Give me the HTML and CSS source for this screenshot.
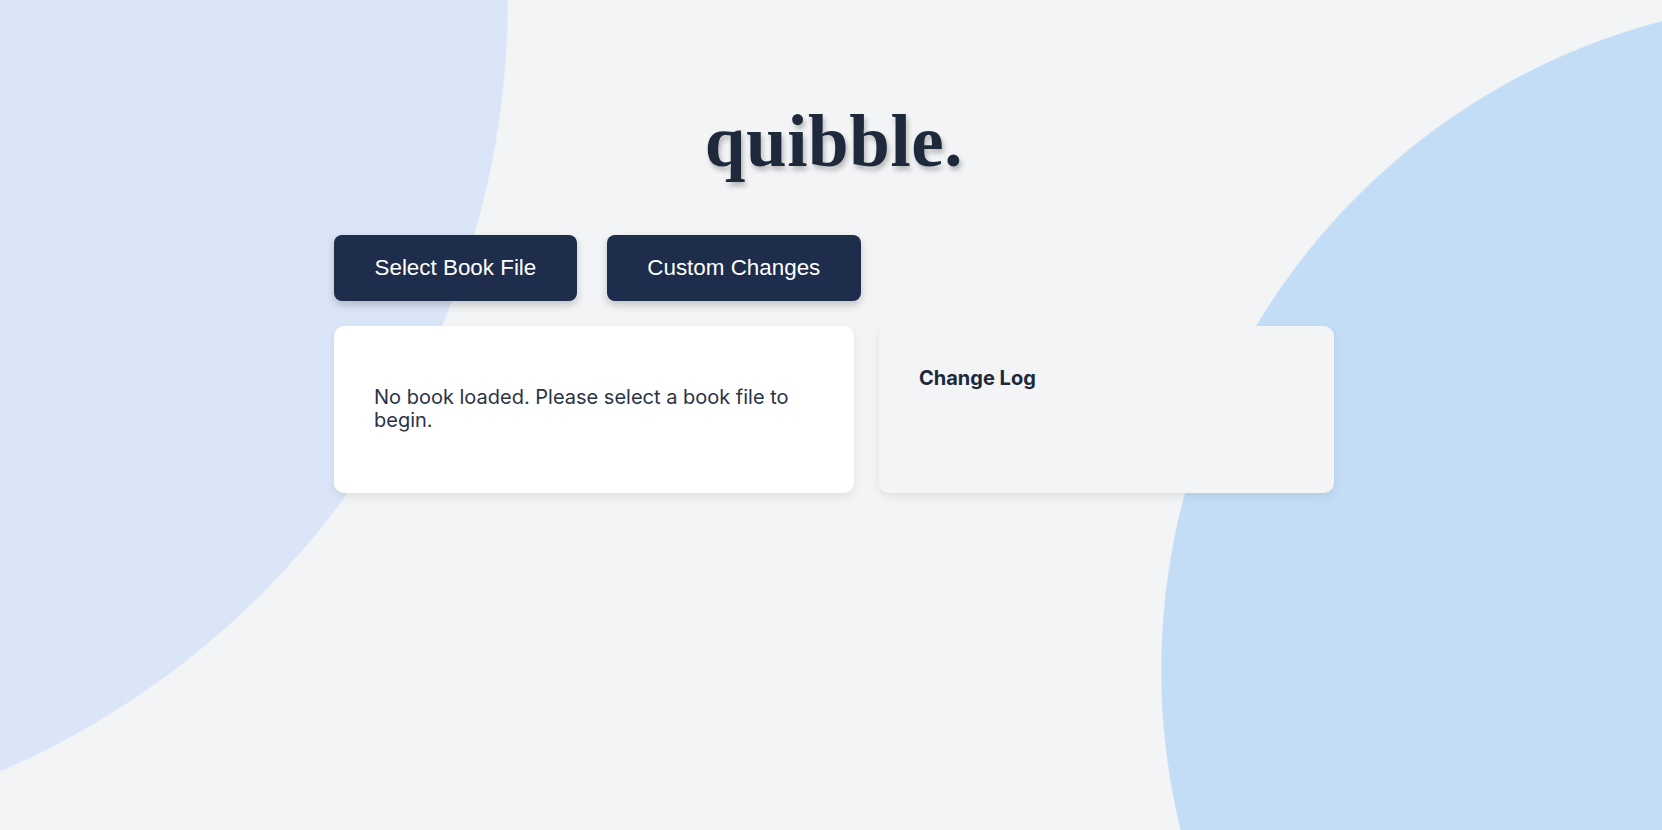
FILE: index.html
```html
<!DOCTYPE html>
<html lang="en">
<head>
<meta charset="utf-8">
<title>quibble.</title>
<link rel="stylesheet" href="styles.css">
</head>
<body>
  <main class="app">
    <h1 class="logo">quibble.</h1>
    <div class="actions">
      <button class="btn" type="button">Select Book File</button>
      <button class="btn" type="button">Custom Changes</button>
    </div>
    <div class="panels">
      <section class="card card-book">
        <p class="empty">No book loaded. Please select a book file to begin.</p>
      </section>
      <section class="card card-log">
        <h3 class="log-title">Change Log</h3>
        <ul class="log-list"></ul>
      </section>
    </div>
  </main>
</body>
</html>
```

FILE: styles.css
```css
html, body {
  margin: 0;
  padding: 0;
}

body {
  min-height: 100vh;
  overflow: hidden;
  background-color: #f3f4f6;
  background-image:
    radial-gradient(circle 840px at -332px 0px, #dae6f7 839px, rgba(218, 230, 247, 0) 840.5px),
    radial-gradient(circle 671px at 1832px 670px, #c4ddf6 670px, rgba(196, 221, 246, 0) 671.5px);
  background-repeat: no-repeat;
  font-family: "Inter", "Liberation Sans", sans-serif;
  color: #1e293b;
}

.app {
  width: 1000px;
  margin: 0 0 0 calc(50% - 497px);
  padding-top: 101px;
  display: flex;
  flex-direction: column;
}

.logo {
  margin: 0 0 52px;
  text-align: center;
  font-family: "Liberation Serif", "Times New Roman", serif;
  font-weight: 700;
  font-size: 73px;
  letter-spacing: 0.6px;
  line-height: 82px;
  color: #1e293b;
  text-shadow: 2px 4px 5px rgba(0, 0, 0, 0.25);
}

.actions {
  display: flex;
  gap: 30px;
  margin-bottom: 25px;
}

.btn {
  border: 0;
  border-radius: 8px;
  background: #1e2d4b;
  color: #ffffff;
  font-family: "Liberation Sans", Arial, sans-serif;
  font-size: 22.4px;
  line-height: 25.5px;
  padding: 20px 40.5px;
  box-shadow: 0 4px 8px rgba(0, 0, 0, 0.2);
  cursor: pointer;
}

.panels {
  display: grid;
  grid-template-columns: 8fr 7fr;
  gap: 25px;
}

.card {
  border-radius: 10px;
  padding: 40px;
  box-shadow: 0 4px 10px rgba(0, 0, 0, 0.08);
  height: 167px;
  box-sizing: border-box;
}

.card-book {
  background: #ffffff;
  display: flex;
  flex-direction: column;
  justify-content: center;
}

.empty {
  margin: 0;
  font-size: 20px;
  line-height: 23.5px;
  color: #2b3346;
}

.card-log {
  background: #f3f4f6;
}

.log-title {
  margin: 0;
  font-size: 20px;
  font-weight: 700;
  line-height: 24px;
  color: #1e293b;
}

.log-list {
  margin: 0;
  padding: 0;
  list-style: none;
}
```
